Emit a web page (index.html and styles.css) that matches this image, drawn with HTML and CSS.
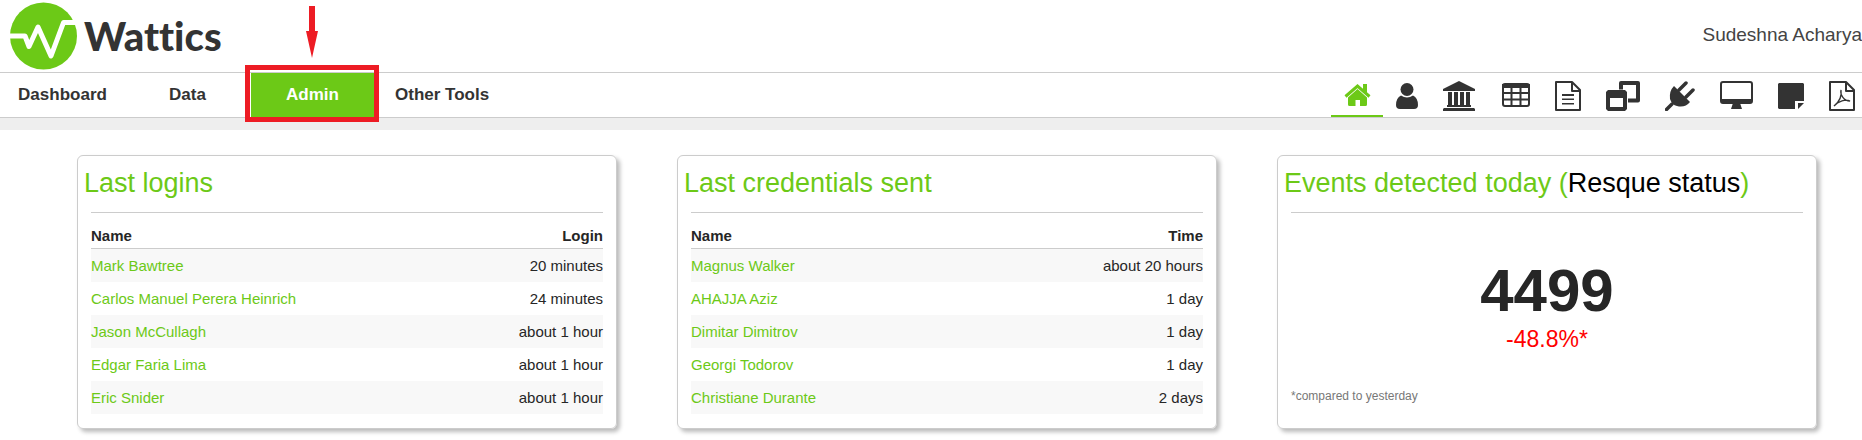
FILE: index.html
```html
<!DOCTYPE html>
<html lang="en">
<head>
    <meta charset="UTF-8">
    <meta name="viewport" content="width=device-width, initial-scale=1.0">
    <title>Wattics - Admin</title>
    <link rel="stylesheet" href="styles.css">
</head>
<body>
    <header class="top">
        <a href="#" class="logo">
            <svg width="67" height="68" viewBox="0 0 67 68" aria-hidden="true">
                <circle cx="33.500" cy="34" r="33.500" fill="#6cc917"/>
                <path d="M0 34H15L19 44.500L28 25L41 54L53.500 20.500H66" fill="none" stroke="#fff" stroke-width="5" stroke-linejoin="round"/>
            </svg>
            <span class="logo-text">Wattics</span>
        </a>
        <span class="user">Sudeshna Acharya</span>
    </header>

    <nav class="nav">
        <ul class="menu">
            <li><a href="#">Dashboard</a></li>
            <li><a href="#">Data</a></li>
            <li class="active">
                <a href="#">Admin</a>
                <svg class="arrow" width="12" height="52" viewBox="0 0 12 52" aria-hidden="true">
                    <path d="M3 0H9V25H12L6 52L0 25H3Z" fill="#ed1c24"/>
                </svg>
            </li>
            <li><a href="#">Other Tools</a></li>
        </ul>
        <ul class="tools">
            <li class="current"><a href="#" aria-label="Home">
                <svg width="27" height="30" viewBox="0 0 27 30">
                    <path d="M1.500 16.500L13.500 6L25.500 16.500" fill="none" stroke="currentColor" stroke-width="3"/>
                    <path d="M19 4H23V13L19 10ZM4 17.500L13.500 9L23 17.500V24.500Q23 26 21.500 26H16V20H11.500V26H5.500Q4 26 4 24.500Z"/>
                </svg>
            </a></li>
            <li><a href="#" aria-label="Users">
                <svg width="22" height="30" viewBox="0 0 22 30">
                    <circle cx="11" cy="8.500" r="6.500"/>
                    <path d="M5 14.500Q11 18.500 17 14.500Q22 17 22 24Q22 28 18 28H4Q0 28 0 24Q0 17 5 14.500Z"/>
                </svg>
            </a></li>
            <li><a href="#" aria-label="Organizations">
                <svg width="32" height="30" viewBox="0 0 32 30">
                    <path d="M16 0L32 8V10H0V8ZM5 11H9V24H11V11H15V24H17V11H21V24H23V11H27V24H28V26H4V24H5ZM1 27H31L32 28V30H0V28Z"/>
                </svg>
            </a></li>
            <li><a href="#" aria-label="Tables">
                <svg width="30" height="30" viewBox="0 0 30 30">
                    <rect x="3" y="3" width="26" height="22" rx="2" fill="none" stroke="currentColor" stroke-width="2"/>
                    <path d="M2 3H30V7H2ZM3 11H29V13H3ZM3 17.500H29V19.500H3ZM10.500 6H12.500V25H10.500ZM19.500 6H21.500V25H19.500Z"/>
                </svg>
            </a></li>
            <li><a href="#" aria-label="Reports">
                <svg width="26" height="30" viewBox="0 0 26 30">
                    <path d="M1 1H17L25 9V29H1ZM17 1V10H25" fill="none" stroke="currentColor" stroke-width="2" stroke-linejoin="round"/>
                    <path d="M7 13H19V15H7ZM7 17.500H19V19H7ZM7 22H19V23.500H7Z"/>
                </svg>
            </a></li>
            <li><a href="#" aria-label="Windows">
                <svg width="34" height="30" viewBox="0 0 34 30">
                    <path d="M15 8.500V2H32V19.500H22" fill="none" stroke="currentColor" stroke-width="4" stroke-linejoin="round"/>
                    <path fill-rule="evenodd" d="M2 9H19L21 11V28L19 30H2L0 28V11ZM4 17V26H17V17Z"/>
                </svg>
            </a></li>
            <li><a href="#" aria-label="Devices">
                <svg width="30" height="30" viewBox="0 0 30 30">
                    <path d="M7 23L1.500 28.500M14 9L21 2M21 16L28 9" fill="none" stroke="currentColor" stroke-width="3.500" stroke-linecap="round"/>
                    <path d="M9 5L25 21Q20 27 12 25Q7 24 5 18Q4 10 9 5Z"/>
                </svg>
            </a></li>
            <li><a href="#" aria-label="Screens">
                <svg width="33" height="30" viewBox="0 0 33 30">
                    <rect x="1" y="1" width="31" height="21" rx="2" fill="none" stroke="currentColor" stroke-width="2"/>
                    <path d="M1 18H32V22H20L22 28H11L13 22H1Z"/>
                </svg>
            </a></li>
            <li><a href="#" aria-label="Notes">
                <svg width="26" height="30" viewBox="0 0 26 30">
                    <path d="M1 2H25L26 3V20H17V28H1L0 27V3ZM20 22H26L20 28Z"/>
                </svg>
            </a></li>
            <li><a href="#" aria-label="PDF">
                <svg width="26" height="30" viewBox="0 0 26 30">
                    <path d="M1 1H17L25 9V29H1ZM17 1V10H25" fill="none" stroke="currentColor" stroke-width="2" stroke-linejoin="round"/>
                    <path d="M5 25C10 21 13 15 12 9C11 14 15 20 21 20C17 18 9 20 5 25Z" fill="none" stroke="currentColor" stroke-width="1.300"/>
                </svg>
            </a></li>
        </ul>
    </nav>

    <main class="cards">
        <section class="card">
            <h2>Last logins</h2>
            <table>
                <thead>
                    <tr><th>Name</th><th>Login</th></tr>
                </thead>
                <tbody>
                    <tr><td><a href="#">Mark Bawtree</a></td><td>20 minutes</td></tr>
                    <tr><td><a href="#">Carlos Manuel Perera Heinrich</a></td><td>24 minutes</td></tr>
                    <tr><td><a href="#">Jason McCullagh</a></td><td>about 1 hour</td></tr>
                    <tr><td><a href="#">Edgar Faria Lima</a></td><td>about 1 hour</td></tr>
                    <tr><td><a href="#">Eric Snider</a></td><td>about 1 hour</td></tr>
                </tbody>
            </table>
        </section>

        <section class="card">
            <h2>Last credentials sent</h2>
            <table>
                <thead>
                    <tr><th>Name</th><th>Time</th></tr>
                </thead>
                <tbody>
                    <tr><td><a href="#">Magnus Walker</a></td><td>about 20 hours</td></tr>
                    <tr><td><a href="#">AHAJJA Aziz</a></td><td>1 day</td></tr>
                    <tr><td><a href="#">Dimitar Dimitrov</a></td><td>1 day</td></tr>
                    <tr><td><a href="#">Georgi Todorov</a></td><td>1 day</td></tr>
                    <tr><td><a href="#">Christiane Durante</a></td><td>2 days</td></tr>
                </tbody>
            </table>
        </section>

        <section class="card">
            <h2>Events detected today (<a href="#">Resque status</a>)</h2>
            <div class="stat">
                <strong class="count">4499</strong>
                <span class="change">-48.8%*</span>
                <small class="note">*compared to yesterday</small>
            </div>
        </section>
    </main>
</body>
</html>
```

FILE: styles.css
```css
* {
    box-sizing: border-box;
}
body {
    margin: 0;
    font-family: "Liberation Sans", Arial, sans-serif;
    font-size: 15px;
    color: #262626;
    background: #fff;
    overflow-x: hidden;
}
a {
    color: #6cc917;
    text-decoration: none;
}
ul {
    list-style: none;
    margin: 0;
    padding: 0;
}

/* header */
.top {
    display: flex;
    justify-content: space-between;
    height: 72px;
    padding-left: 10px;
}
.logo {
    display: flex;
    align-items: center;
    gap: 7px;
    color: #333;
}
.logo-text {
    font-family: Lato, sans-serif;
    font-size: 40px;
    font-weight: 900;
    font-variant-ligatures: none;
    line-height: 68px;
}
.user {
    color: #444;
    font-size: 19px;
    line-height: 70px;
}

/* navigation */
.nav {
    display: flex;
    justify-content: space-between;
    border-top: 1px solid #ccc;
    border-bottom: 1px solid #ccc;
    box-shadow: 0 12px 0 #eee;
}
.menu {
    display: flex;
}
.menu li {
    position: relative;
    min-width: 125px;
}
.menu a {
    display: block;
    padding: 0 20px;
    color: #333;
    font-size: 17px;
    font-weight: bold;
    line-height: 44px;
    text-align: center;
}
.menu li:first-child a {
    padding: 0;
}
.menu .active a {
    background: #6cc917;
    color: #fff;
    border: 1px solid #fff;
    border-width: 0 1px;
}
.menu .active::after {
    content: "";
    position: absolute;
    inset: -8px -4px -5px -5px;
    border: 5px solid #ed1c24;
}
.arrow {
    position: absolute;
    left: 56px;
    bottom: 59px;
}
.tools {
    display: flex;
}
.tools a {
    display: flex;
    align-items: center;
    height: 44px;
    padding: 2px 12px 0 13px;
    color: #333;
}
.tools li:last-child a {
    padding-right: 7px;
}
.tools svg {
    fill: currentColor;
}
.tools .current a {
    color: #6cc917;
    border-bottom: 2px solid #6cc917;
}

/* cards */
.cards {
    display: grid;
    grid-template-columns: repeat(3, 1fr);
    gap: 60px;
    padding: 37px 45px 12px 77px;
}
.card {
    padding: 11px 13px 14px;
    border: 1px solid #ccc;
    border-radius: 6px;
    box-shadow: 3px 3px 4px #bbb;
}
.card h2 {
    margin: 0 0 13px -7px;
    color: #6cc917;
    font-size: 27px;
    font-weight: normal;
    line-height: 32px;
}
.card h2 a {
    color: #000;
}
table {
    width: 100%;
    border-top: 1px solid #ccc;
    border-collapse: collapse;
}
th {
    height: 36px;
    padding: 10px 0 0;
    border-bottom: 1px solid #ccc;
    text-align: left;
}
td {
    height: 33px;
    padding: 0;
}
th:last-child,
td:last-child {
    text-align: right;
}
tbody tr:nth-child(odd) {
    background: #f8f8f8;
}
.stat {
    display: flex;
    flex-direction: column;
    align-items: center;
    padding-top: 44px;
    border-top: 1px solid #ccc;
}
.count {
    font-size: 60px;
    line-height: 68px;
}
.change {
    color: #f00;
    font-size: 23px;
    line-height: 28px;
}
.note {
    align-self: flex-start;
    margin-top: 35px;
    color: #777;
    font-size: 12px;
    line-height: 16px;
}
```
